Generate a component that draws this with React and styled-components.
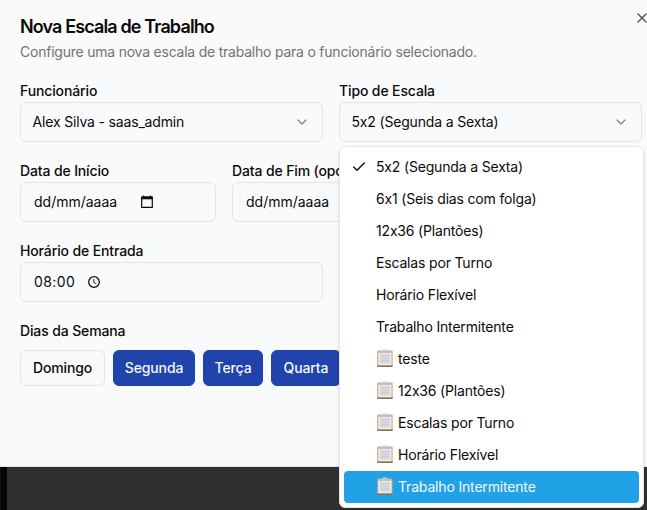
import React from 'react';
import styled, { createGlobalStyle, css } from 'styled-components';
import { Check, ChevronDown, X } from 'lucide-react';

const GlobalStyle = createGlobalStyle`
  *, *::before, *::after { box-sizing: border-box; }
  body {
    margin: 0;
    overflow: hidden;
    background: #303030;
    color: #0c0a09;
    font-family: Inter, "Liberation Sans", sans-serif;
    font-size: 14px;
    line-height: 20px;
    letter-spacing: -0.17px;
    font-feature-settings: "calt" 0;
  }
`;

const Screen = styled.div`
  position: relative;
  width: 647px;
  height: 510px;
  overflow: hidden;
  background: linear-gradient(to right, #0a0f16 0 1px, #050506 1px 7px, #303030 7px);
`;

const Dialog = styled.main`
  height: 467px;
  padding: 15px 5px 0 20px;
  background: #f9fafc;
  border-bottom: 1px solid #e4e4e4;
`;

const CloseButton = styled.button`
  position: absolute;
  top: 10px;
  left: 634px;
  display: flex;
  padding: 0;
  border: 0;
  background: none;
  color: #535456;
`;

const Title = styled.h1`
  margin: 0;
  font-size: 18px;
  font-weight: 600;
  line-height: 24px;
  letter-spacing: -0.87px;
`;

const Description = styled.p`
  margin: 3px 0 0;
  color: #78716c;
  letter-spacing: -0.225px;
`;

const Form = styled.form`
  display: grid;
  gap: 18px;
  margin-top: 18px;
`;

const Row = styled.div`
  display: grid;
  grid-template-columns: ${(p) => p.$columns};
  gap: 16px;
`;

const Field = styled.div`
  display: flex;
  flex-direction: column;
  min-width: 0;
`;

const Label = styled.span`
  height: 22px;
  font-weight: 500;
  line-height: 22px;
  letter-spacing: -0.13px;
  white-space: nowrap;
`;

const control = css`
  display: flex;
  align-items: center;
  height: 40px;
  border: 1px solid #e5e4e3;
  border-radius: 6px;
  background: #f9fafc;
  color: #0c0a09;
  font: inherit;
  font-feature-settings: inherit;
`;

const SelectTrigger = styled.button`
  ${control}
  justify-content: space-between;
  padding: 0 12px 0 11.5px;
  letter-spacing: inherit;
  svg { color: #858588; }
`;

const InputBox = styled.div`
  ${control}
  gap: ${(p) => p.$gap}px;
  padding: 0 13px;
  letter-spacing: ${(p) => p.$tracking}px;
`;

const Days = styled.div`
  display: flex;
  gap: 8px;
  margin-top: 8px;
`;

const Day = styled.button`
  flex: none;
  width: ${(p) => p.$width}px;
  height: 36px;
  padding: 0;
  border: 1px solid ${(p) => (p.$active ? '#2043ac' : '#e5e4e3')};
  border-radius: 6px;
  background: ${(p) => (p.$active ? '#2043ac' : '#f9fafc')};
  color: ${(p) => (p.$active ? '#f5f7fb' : '#0c0a09')};
  font: inherit;
  font-weight: 500;
  letter-spacing: -0.13px;
`;

const Menu = styled.div`
  position: absolute;
  top: 146px;
  left: 339px;
  width: 305px;
  height: 362px;
  padding: 4px;
  border: 1px solid #e5e4e3;
  border-radius: 6px;
  background: #fff;
  box-shadow: 0 4px 6px -1px rgba(0, 0, 0, 0.1), 0 2px 4px -2px rgba(0, 0, 0, 0.1);
`;

const Option = styled.div`
  display: flex;
  align-items: center;
  height: 32px;
  padding-left: 7px;
  border-radius: 4px;
  background: ${(p) => (p.$highlighted ? '#22a2e6' : 'transparent')};
  color: ${(p) => (p.$highlighted ? '#f5f8fb' : '#0c0a09')};
`;

const CheckSlot = styled.span`
  display: flex;
  width: 25px;
  flex: none;
`;

const Clipboard = styled.svg`
  flex: none;
  margin-right: 4px;
`;

function ClipboardIcon() {
  return (
    <Clipboard width="18" height="20" viewBox="0 0 18 20" aria-hidden="true">
      <rect x="1.2" y="1.4" width="15.4" height="16.5" rx="1" fill="#c3a37a" />
      <path d="M1.2 16.3h15.4v.7a1 1 0 0 1-1 1H2.2a1 1 0 0 1-1-1z" fill="#8b6f50" />
      <rect x="2.2" y="2.3" width="13.4" height="14" fill="#ebebec" />
      <rect x="4" y="5.2" width="9.8" height="9.2" fill="#d4d4d5" />
      <path d="M2.2 3h13.4" stroke="#a6acb6" strokeWidth="1.4" />
      <path d="M4.6 2.3q.3-1 2.4-1 .4-1.1 1.9-1.1t1.9 1.1q2.1 0 2.4 1z" fill="#c8d1dc" />
    </Clipboard>
  );
}

function CalendarIcon() {
  return (
    <svg width="12" height="14" viewBox="0 0 12 14" aria-hidden="true">
      <path d="M2.5 .5v2M9.5 .5v2" stroke="#0c0a09" strokeWidth="1.2" />
      <path d="M.7 2h10.6v10.3H.7z" fill="none" stroke="#0c0a09" strokeWidth="1.2" strokeLinejoin="round" />
      <path d="M.5 1.5h11v2.8H.5z" fill="#0c0a09" />
    </svg>
  );
}

function ClockIcon() {
  return (
    <svg width="12" height="12" viewBox="0 0 12 12" fill="none" stroke="#0c0a09" aria-hidden="true">
      <circle cx="6" cy="6" r="5.3" strokeWidth="1.25" />
      <path d="M5.8 3v3.3l2.5 1.5" strokeWidth="0.9" />
    </svg>
  );
}

const days = [
  { name: 'Domingo', width: 85 },
  { name: 'Segunda', width: 82, active: true },
  { name: 'Terça', width: 60, active: true },
  { name: 'Quarta', width: 70, active: true },
];

const options = [
  { text: '5x2 (Segunda a Sexta)', checked: true },
  { text: '6x1 (Seis dias com folga)' },
  { text: '12x36 (Plantões)' },
  { text: 'Escalas por Turno' },
  { text: 'Horário Flexível' },
  { text: 'Trabalho Intermitente' },
  { text: 'teste', icon: true },
  { text: '12x36 (Plantões)', icon: true },
  { text: 'Escalas por Turno', icon: true },
  { text: 'Horário Flexível', icon: true },
  { text: 'Trabalho Intermitente', icon: true, highlighted: true },
];

function SelectField({ label, value }) {
  return (
    <Field>
      <Label>{label}</Label>
      <SelectTrigger type="button">
        {value}
        <ChevronDown size={16} />
      </SelectTrigger>
    </Field>
  );
}

function DateField({ label }) {
  return (
    <Field>
      <Label>{label}</Label>
      <InputBox $gap={23.5} $tracking={0}>
        dd/mm/aaaa
        <CalendarIcon />
      </InputBox>
    </Field>
  );
}

export default function App() {
  return (
    <>
      <GlobalStyle />
      <Screen>
        <Dialog>
          <Title>Nova Escala de Trabalho</Title>
          <Description>Configure uma nova escala de trabalho para o funcionário selecionado.</Description>
          <Form>
            <Row $columns="303px 303px">
              <SelectField label="Funcionário" value="Alex Silva - saas_admin" />
              <SelectField label="Tipo de Escala" value="5x2 (Segunda a Sexta)" />
            </Row>
            <Row $columns="196px 196px">
              <DateField label="Data de Início" />
              <DateField label="Data de Fim (opcional)" />
            </Row>
            <Row $columns="303px">
              <Field>
                <Label>Horário de Entrada</Label>
                <InputBox $gap={12.5} $tracking={0.4}>
                  08:00
                  <ClockIcon />
                </InputBox>
              </Field>
            </Row>
            <Field>
              <Label>Dias da Semana</Label>
              <Days>
                {days.map((day) => (
                  <Day key={day.name} type="button" $width={day.width} $active={day.active}>
                    {day.name}
                  </Day>
                ))}
              </Days>
            </Field>
          </Form>
        </Dialog>
        <CloseButton type="button" aria-label="Fechar">
          <X size={16} />
        </CloseButton>
        <Menu role="listbox">
          {options.map((option, index) => (
            <Option key={index} role="option" $highlighted={option.highlighted}>
              <CheckSlot>{option.checked && <Check size={16} />}</CheckSlot>
              {option.icon && <ClipboardIcon />}
              {option.text}
            </Option>
          ))}
        </Menu>
      </Screen>
    </>
  );
}
